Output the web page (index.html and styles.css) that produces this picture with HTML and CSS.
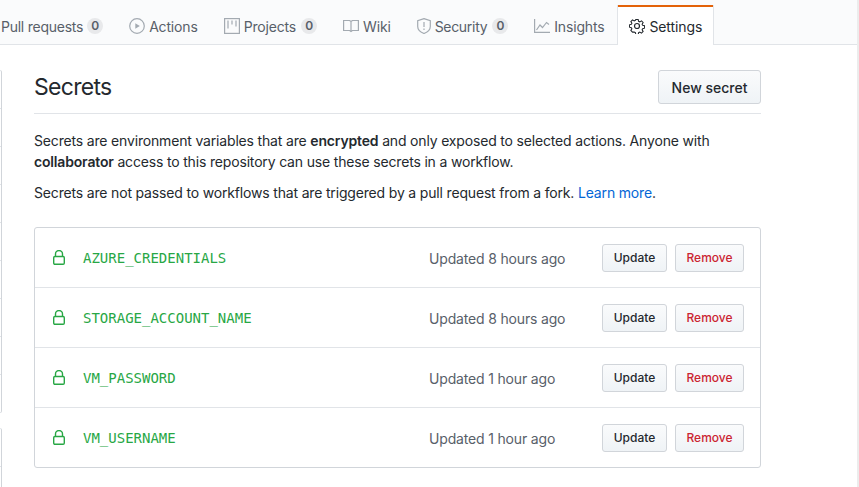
FILE: index.html
```html
<!DOCTYPE html>
<html lang="en">
<head>
    <meta charset="utf-8">
    <title>Secrets</title>
    <link rel="stylesheet" href="styles.css">
</head>
<body>
<div class="page">
    <!-- repo tabs, cut off on the left -->
    <nav class="tabs">
        <a class="tab tab-first">Pull requests <span class="counter">0</span></a>
        <a class="tab">
            <svg class="icon" viewBox="0 0 16 16"><circle cx="8" cy="8" r="7.3"/><path class="soft" d="M6.300 5.200v5.600L10.800 8z"/></svg>
            Actions
        </a>
        <a class="tab">
            <svg class="icon" viewBox="0 0 16 16"><rect x=".6" y=".6" width="14.8" height="14.8"/><path d="M4 2.500v8M8 2.500v4M12 2.500v6"/></svg>
            Projects <span class="counter">0</span>
        </a>
        <a class="tab">
            <svg class="icon" viewBox="0 0 16 16"><path d="M.6 2.500h6l1.400 1 1.400-1h6v10h-6l-1.400 1-1.400-1h-6zM8 3.500v10"/></svg>
            Wiki
        </a>
        <a class="tab tab-security">
            <svg class="icon icon-narrow" viewBox="0 0 14 16"><path d="M7 .6l6.300 2v6c0 3.400-3.300 5.800-6.300 6.900C4 14.400.7 12 .7 8.600v-6zM7 4v5M7 10.500v1.500"/></svg>
            Security <span class="counter">0</span>
        </a>
        <a class="tab">
            <svg class="icon" viewBox="0 0 16 16"><path d="M.6 1v13.400h15.400M2.500 12l3.500-5 2.500 2.500 4-5 2.500 2"/></svg>
            Insights
        </a>
        <a class="tab tab-selected">
            <svg class="icon" viewBox="0 0 16 16"><path d="M6.700.7h2.600l.5 2.100 1.300.6 1.900-1.100 1.800 1.800-1.100 1.900.6 1.300 2.100.5v2.600l-2.100.5-.6 1.300 1.100 1.900-1.800 1.800-1.900-1.100-1.300.6-.5 2.100H6.700l-.5-2.100-1.300-.6L3 14.800 1.200 13l1.100-1.900-.6-1.300-2.100-.5V6.700l2.100-.5.6-1.300L1.200 3 3 1.200l1.900 1.100 1.300-.6z" transform="translate(.8 .8) scale(.9)"/><circle cx="8" cy="8" r="2.500"/></svg>
            Settings
        </a>
    </nav>

    <div class="content">
        <!-- left menu, only its edge is in view -->
        <aside class="side">
            <div class="side-box">
                <div class="side-row"></div>
                <div class="side-row"></div>
                <div class="side-row"></div>
                <div class="side-row"></div>
                <div class="side-row"></div>
                <div class="side-row"></div>
                <div class="side-row"></div>
                <div class="side-row"></div>
                <div class="side-row"></div>
            </div>
            <div class="side-box side-box2">
                <div class="side-row"></div>
                <div class="side-row"></div>
            </div>
        </aside>

        <main class="main">
            <div class="head">
                <h2>Secrets</h2>
                <button class="btn btn-big">New secret</button>
            </div>
            <p class="intro">Secrets are environment variables that are <b>encrypted</b> and only exposed to selected actions. Anyone with <b>collaborator</b> access to this repository can use these secrets in a workflow.</p>
            <p class="intro">Secrets are not passed to workflows that are triggered by a pull request from a fork. <a class="link">Learn more</a>.</p>

            <div class="list">
                <div class="row">
                    <svg class="lock" viewBox="0 0 12 15"><path d="M2.500 6.500V4a3.500 3.500 0 0 1 7 0v2.500"/><rect x=".7" y="6.500" width="10.600" height="7.800" rx="1.200"/></svg>
                    <code class="name">AZURE_CREDENTIALS</code>
                    <span class="time">Updated 8 hours ago</span>
                    <button class="btn">Update</button>
                    <button class="btn btn-red">Remove</button>
                </div>
                <div class="row">
                    <svg class="lock" viewBox="0 0 12 15"><path d="M2.500 6.500V4a3.500 3.500 0 0 1 7 0v2.500"/><rect x=".7" y="6.500" width="10.600" height="7.800" rx="1.200"/></svg>
                    <code class="name">STORAGE_ACCOUNT_NAME</code>
                    <span class="time">Updated 8 hours ago</span>
                    <button class="btn">Update</button>
                    <button class="btn btn-red">Remove</button>
                </div>
                <div class="row">
                    <svg class="lock" viewBox="0 0 12 15"><path d="M2.500 6.500V4a3.500 3.500 0 0 1 7 0v2.500"/><rect x=".7" y="6.500" width="10.600" height="7.800" rx="1.200"/></svg>
                    <code class="name">VM_PASSWORD</code>
                    <span class="time">Updated 1 hour ago</span>
                    <button class="btn">Update</button>
                    <button class="btn btn-red">Remove</button>
                </div>
                <div class="row">
                    <svg class="lock" viewBox="0 0 12 15"><path d="M2.500 6.500V4a3.500 3.500 0 0 1 7 0v2.500"/><rect x=".7" y="6.500" width="10.600" height="7.800" rx="1.200"/></svg>
                    <code class="name">VM_USERNAME</code>
                    <span class="time">Updated 1 hour ago</span>
                    <button class="btn">Update</button>
                    <button class="btn btn-red">Remove</button>
                </div>
            </div>
        </main>
    </div>
</div>
</body>
</html>
```

FILE: styles.css
```css
* {
    box-sizing: border-box;
}

body {
    margin: 0;
    background-color: #fff;
    color: #24292e;
    font-family: Inter, "Liberation Sans", sans-serif;
    font-size: 14px;
    letter-spacing: -.17px;
    overflow: hidden;
}

.page {
    width: 859px;
    height: 487px;
    border-right: 2px solid #ececec;
    overflow: hidden;
}

/* tabs */
.tabs {
    display: flex;
    height: 45px;
    background-color: #fafbfc;
    border-bottom: 1px solid #e1e4e8;
}

.tab {
    display: flex;
    align-items: center;
    gap: 4px;
    height: 44px;
    padding: 8px 13px 0;
    color: #586069;
    white-space: nowrap;
}

.tab-first {
    padding-left: 1px;
    letter-spacing: -.25px;
}

.tab-first .counter {
    margin-left: 0;
}

.tab-security {
    letter-spacing: -.3px;
}

.tab-selected {
    align-self: flex-end;
    height: 40px;
    margin-bottom: -1px;
    padding: 2px 11px 0;
    color: #24292e;
    background-color: #fff;
    border: 1px solid #e1e4e8;
    border-top: 0;
    border-bottom: 0;
    box-shadow: inset 0 2px 0 #e36209;
    letter-spacing: -.1px;
}

.icon {
    width: 16px;
    height: 16px;
    fill: none;
    stroke: #a3aab1;
    stroke-width: 1.2;
}

.icon-narrow {
    width: 14px;
}

.icon .soft {
    fill: #a3aab1;
    stroke: none;
}

.tab-selected .icon {
    stroke: #24292e;
}

.counter {
    display: inline-block;
    width: 16px;
    height: 16px;
    margin-left: 1px;
    border-radius: 8px;
    background-color: rgba(27, 31, 35, .08);
    color: #586069;
    font-size: 12px;
    font-weight: 600;
    line-height: 16px;
    text-align: center;
}

/* page under the tabs */
.content {
    display: flex;
}

.side {
    width: 2px;
    padding-top: 25px;
    flex-shrink: 0;
}

.side-box {
    border-right: 1px solid #d1d5da;
    border-top: 1px solid #e1e4e8;
    border-top-right-radius: 2px;
    border-bottom-right-radius: 2px;
}

.side-box2 {
    margin-top: 15px;
}

.side-row {
    height: 38px;
    border-bottom: 1px solid #e1e4e8;
}

.main {
    width: 727px;
    margin-left: 32px;
    padding-top: 25px;
}

.head {
    display: flex;
    justify-content: space-between;
    align-items: center;
    padding-bottom: 9px;
    margin-bottom: 16px;
    border-bottom: 1px solid #e1e4e8;
}

.head h2 {
    margin: 0;
    font-size: 23px;
    font-weight: 400;
    letter-spacing: -.7px;
}

.intro {
    margin: 0 0 10px;
    line-height: 21px;
}

.intro b {
    font-weight: 600;
}

.link {
    color: #0366d6;
}

/* buttons */
.btn {
    width: 65px;
    height: 28px;
    padding: 0;
    border: 1px solid #d1d5da;
    border-radius: 3px;
    background-image: linear-gradient(#fafbfc, #eff3f6);
    color: #24292e;
    font-family: Inter, "Liberation Sans", sans-serif;
    font-size: 12px;
    font-weight: 500;
}

.btn-big {
    width: 103px;
    height: 34px;
    font-size: 14px;
}

.btn-red {
    width: 69px;
    margin-left: 8px;
    color: #cb2431;
}

/* secrets list */
.list {
    margin-top: 24px;
    border: 1px solid #d1d5da;
    border-radius: 3px;
}

.row {
    display: flex;
    align-items: center;
    height: 60px;
    padding: 0 16px 0 18px;
    border-top: 1px solid #e1e4e8;
}

.row:first-child {
    border-top: 0;
    height: 59px;
}

.lock {
    width: 12px;
    height: 15px;
    fill: none;
    stroke: #28a745;
    stroke-width: 1.4;
}

.name {
    width: 346px;
    margin-left: 18px;
    color: #28a745;
    font-family: "DejaVu Sans Mono", monospace;
    font-size: 14px;
    letter-spacing: 0;
}

.time {
    flex: 1;
    padding-top: 2px;
    color: #586069;
}
```
